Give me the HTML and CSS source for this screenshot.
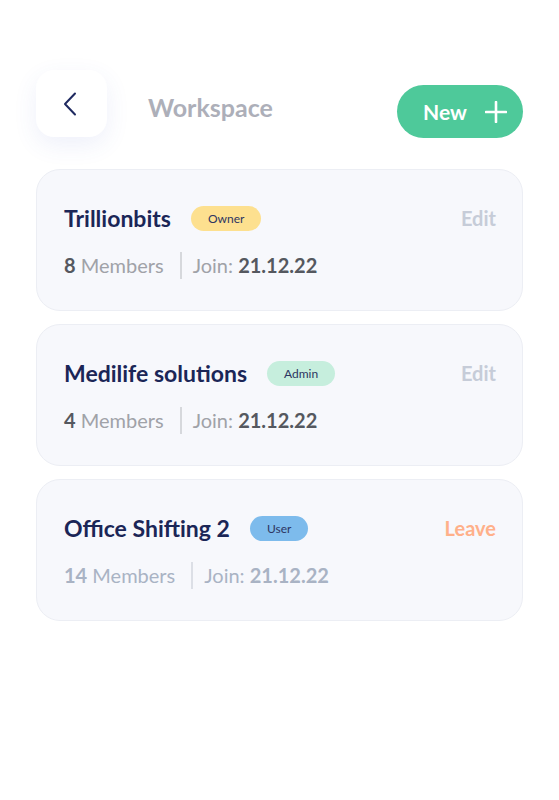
FILE: index.html
```html
<!DOCTYPE html>
<html lang="en">
<head>
    <meta charset="UTF-8">
    <meta name="viewport" content="width=device-width, initial-scale=1.0">
    <title>Workspace</title>
    <link rel="stylesheet" href="styles.css">
</head>
<body>
    <div class="page">
        <div class="header">
            <button class="back-btn" aria-label="Back">
                <svg width="14" height="24" viewBox="0 0 14 24">
                    <path d="M12 1.5 L2 12 L12 22.5" fill="none" stroke="#1f2a60" stroke-width="2" stroke-linecap="round" stroke-linejoin="round"/>
                </svg>
            </button>
            <h1 class="title">Workspace</h1>
            <button class="new-btn">
                New
                <svg width="22" height="22" viewBox="0 0 22 22">
                    <path d="M11 1 V21 M1 11 H21" stroke="#fff" stroke-width="2.6" stroke-linecap="round"/>
                </svg>
            </button>
        </div>

        <div class="list">
            <div class="card">
                <div class="card-top">
                    <span class="name">Trillionbits</span>
                    <span class="badge owner">Owner</span>
                    <span class="action">Edit</span>
                </div>
                <div class="meta">
                    <span class="members"><b>8</b> Members</span>
                    <span class="sep"></span>
                    <span class="join">Join: <b>21.12.22</b></span>
                </div>
            </div>

            <div class="card">
                <div class="card-top">
                    <span class="name">Medilife solutions</span>
                    <span class="badge admin">Admin</span>
                    <span class="action">Edit</span>
                </div>
                <div class="meta">
                    <span class="members"><b>4</b> Members</span>
                    <span class="sep"></span>
                    <span class="join">Join: <b>21.12.22</b></span>
                </div>
            </div>

            <div class="card muted">
                <div class="card-top">
                    <span class="name">Office Shifting 2</span>
                    <span class="badge user">User</span>
                    <span class="action leave">Leave</span>
                </div>
                <div class="meta">
                    <span class="members"><b>14</b> Members</span>
                    <span class="sep"></span>
                    <span class="join">Join: <b>21.12.22</b></span>
                </div>
            </div>
        </div>
    </div>
</body>
</html>
```

FILE: styles.css
```css
body {
    margin: 0;
    background: #fff;
    font-family: Lato, "Noto Sans", sans-serif;
}
.page {
    padding: 70px 36px 0;
}
.header {
    display: flex;
    align-items: flex-start;
    height: 68px;
}
.back-btn {
    width: 71px;
    height: 67px;
    border: none;
    border-radius: 18px;
    background: #fff;
    box-shadow: 0 8px 24px rgba(70, 90, 200, 0.09);
    display: flex;
    align-items: center;
    justify-content: center;
    padding: 0 4px 0 0;
    cursor: pointer;
}
.title {
    margin: 0 0 0 41px;
    padding-top: 22px;
    font-size: 25px;
    font-weight: 700;
    line-height: 30px;
    color: #adafb9;
}
.new-btn {
    margin: 15px 0 0 auto;
    width: 126px;
    height: 53px;
    border: none;
    border-radius: 27px;
    background: #4ec99a;
    color: #fff;
    font-family: inherit;
    font-size: 21px;
    font-weight: 700;
    display: flex;
    align-items: center;
    justify-content: center;
    gap: 18px;
    padding: 0 0 0 10px;
    cursor: pointer;
}
.list {
    margin-top: 31px;
    display: flex;
    flex-direction: column;
    gap: 13px;
}
.card {
    box-sizing: border-box;
    height: 142px;
    padding: 34px 26px 0 27px;
    background: #f7f8fc;
    border: 1px solid #eceef4;
    border-radius: 24px;
}
.card-top {
    display: flex;
    align-items: center;
    height: 28px;
}
.name {
    font-size: 23px;
    font-weight: 700;
    color: #1b2657;
}
.badge {
    margin-left: 20px;
    height: 25px;
    line-height: 25px;
    padding: 0 17px;
    border-radius: 13px;
    font-size: 12px;
    color: #2d3561;
}
.owner { background: #fde08f; }
.admin { background: #c6eedd; }
.user { background: #7dbbec; }
.action {
    margin-left: auto;
    font-size: 20px;
    font-weight: 700;
    color: #c6ccd8;
}
.action.leave {
    color: #ffb08a;
}
.meta {
    display: flex;
    align-items: center;
    height: 28px;
    margin-top: 19px;
    font-size: 20px;
    color: #a0a2a8;
}
.meta b {
    color: #55585f;
}
.sep {
    width: 2px;
    height: 27px;
    background: #d6d8dc;
    margin: 0 11px 0 16px;
}
.muted .meta,
.muted .meta b {
    color: #a9b3c4;
}
.muted .sep {
    background: #dcdfe6;
}
```
